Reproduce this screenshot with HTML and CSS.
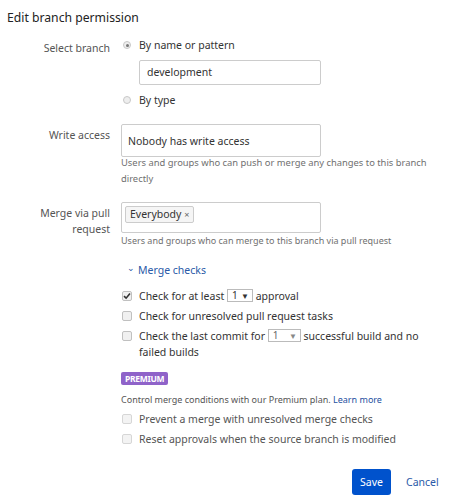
FILE: index.html
```html
<!DOCTYPE html>
<html lang="en">
<head>
    <meta charset="UTF-8">
    <title>Edit branch permission</title>
    <link rel="stylesheet" href="styles.css">
</head>
<body>
    <div class="dialog">
        <h2>Edit branch permission</h2>

        <div class="row first">
            <div class="label">Select branch</div>
            <div class="field">
                <label class="radio-line"><span class="radio checked"></span>By name or pattern</label>
                <div class="text-input branch-input">development</div>
                <label class="radio-line"><span class="radio"></span>By type</label>
            </div>
        </div>

        <div class="row write">
            <div class="label">Write access</div>
            <div class="field">
                <div class="text-input big">Nobody has write access</div>
                <p class="help large">Users and groups who can push or merge any changes to this branch<br><span>directly</span></p>
            </div>
        </div>

        <div class="row merge">
            <div class="label two-line">Merge via pull<br><span>request</span></div>
            <div class="field">
                <div class="text-input big tags"><span class="tag">Everybody <span class="x">&#215;</span></span></div>
                <p class="help">Users and groups who can merge to this branch via pull request</p>

                <a class="toggle" href="#"><span class="chev">&#8964;</span>Merge checks</a>

                <div class="checks">
                    <div class="check"><span class="box checked">
                        <svg width="8" height="8" viewBox="0 0 8 8"><path d="M1 4.2 L3.1 6.2 L7 1.5" fill="none" stroke="#333" stroke-width="1.6"/></svg>
                    </span><span>Check for at least <span class="select"><span>1</span><b>&#9660;</b></span> approval</span></div>
                    <div class="check"><span class="box"></span><span>Check for unresolved pull request tasks</span></div>
                    <div class="check"><span class="box"></span><span>Check the last commit for <span class="select wide"><span>1</span><b class="light">&#9660;</b></span> successful build and no<br><span>failed builds</span></span></div>
                </div>

                <span class="badge">PREMIUM</span>
                <p class="help premium">Control merge conditions with our Premium plan. <a href="#">Learn more</a></p>
                <div class="checks disabled">
                    <div class="check"><span class="box"></span><span>Prevent a merge with unresolved merge checks</span></div>
                    <div class="check"><span class="box"></span><span>Reset approvals when the source branch is modified</span></div>
                </div>
            </div>
        </div>

        <div class="actions">
            <button class="save">Save</button>
            <a class="cancel" href="#">Cancel</a>
        </div>
    </div>
</body>
</html>
```

FILE: styles.css
```css
body {
    margin: 0;
    font-family: "Noto Sans", "Open Sans", sans-serif;
    color: #333;
    background: #fff;
}

.dialog {
    width: 460px;
    padding: 9px 0 0 7px;
    box-sizing: border-box;
}

h2 {
    margin: 0;
    font-size: 12.2px;
    font-weight: normal;
    color: #222;
    line-height: 18px;
}

.row {
    display: grid;
    grid-template-columns: 103px 1fr;
    column-gap: 11px;
    font-size: 10.5px;
}

.row.first {
    margin-top: 10px;
}

.row.write {
    margin-top: 16px;
}

.row.merge {
    margin-top: 15px;
}

.label {
    text-align: right;
    color: #555;
    line-height: 16px;
    padding-top: 3px;
}

.radio-line {
    display: flex;
    align-items: center;
    height: 16px;
    color: #333;
    padding-left: 2px;
}

.radio {
    width: 8px;
    height: 8px;
    border: 1px solid #c8c8c8;
    border-radius: 50%;
    background: #eee;
    margin-right: 8px;
    box-sizing: border-box;
    position: relative;
}

.radio.checked::after {
    content: "";
    position: absolute;
    left: 1.5px;
    top: 1.5px;
    width: 3px;
    height: 3px;
    border-radius: 50%;
    background: #777;
}

.text-input {
    border: 1px solid #ccc;
    border-radius: 2px;
    box-sizing: border-box;
    width: 200px;
    color: #333;
}

.branch-input {
    width: 182px;
    height: 25px;
    margin: 7px 0 7px 18px;
    padding: 0 7px;
    line-height: 23px;
}

.text-input.big {
    height: 33px;
    padding: 8px 6px 0;
    line-height: 16px;
}

.text-input.tags {
    height: 31px;
    padding: 3px 3px 0;
}

.tag {
    display: inline-block;
    border: 1px solid #ccc;
    background: #f5f5f5;
    border-radius: 2px;
    padding: 0 4px;
    line-height: 14px;
}

.tag .x {
    font-size: 9px;
    color: #666;
}

.help {
    margin: 0;
    font-size: 9px;
    line-height: 16px;
    color: #707070;
    width: 300px;
}

.help.large {
    font-size: 9.4px;
    margin-top: -2px;
    width: 320px;
}

.toggle {
    display: block;
    margin-top: 13px;
    margin-left: 6px;
    color: #2a5aa8;
    text-decoration: none;
    line-height: 16px;
}

.chev {
    display: inline-block;
    font-size: 9px;
    margin-right: 3px;
    position: relative;
    top: -3px;
}

.checks {
    margin-top: 9px;
}

.check {
    display: flex;
    align-items: flex-start;
    line-height: 16px;
    margin-bottom: 4px;
    width: 310px;
}

.box {
    flex: none;
    width: 10px;
    height: 10px;
    border: 1px solid #c0c0c0;
    border-radius: 2px;
    background: #f0f0f0;
    box-sizing: border-box;
    margin: 3px 7px 0 1px;
    display: flex;
    align-items: center;
    justify-content: center;
}

.select {
    display: inline-flex;
    align-items: center;
    justify-content: space-between;
    border: 1px solid #bbb;
    height: 13px;
    padding: 0 3px 0 4px;
    box-sizing: border-box;
    vertical-align: top;
    margin-top: 1px;
    font-size: 10px;
    line-height: 11px;
    width: 26px;
}

.select b {
    font-size: 8px;
}

.select.wide {
    width: 33px;
    color: #666;
}

.select .light {
    color: #888;
}

.badge {
    display: inline-block;
    margin-top: 8px;
    background: #8f63c9;
    color: #fff;
    font-weight: bold;
    font-size: 8.5px;
    line-height: 13px;
    padding: 0 4px;
    border-radius: 2px;
    letter-spacing: -0.3px;
}

.help.premium {
    margin-top: 7px;
    color: #555;
}

.help a {
    color: #1e4fa0;
    text-decoration: none;
}

.checks.disabled {
    margin-top: 3px;
}

.disabled .box {
    border-color: #d6d6d6;
    background: #f3f3f3;
}

.disabled .check {
    color: #555;
}

.actions {
    display: flex;
    align-items: center;
    margin-top: 18px;
    padding-left: 345px;
}

.save {
    background: #0052cc;
    color: #fff;
    border: none;
    border-radius: 3px;
    width: 39px;
    height: 26px;
    font-family: inherit;
    font-size: 10.5px;
    padding: 0;
}

.cancel {
    margin-left: 15px;
    color: #2a5aa8;
    text-decoration: none;
    font-size: 10.5px;
}
```
